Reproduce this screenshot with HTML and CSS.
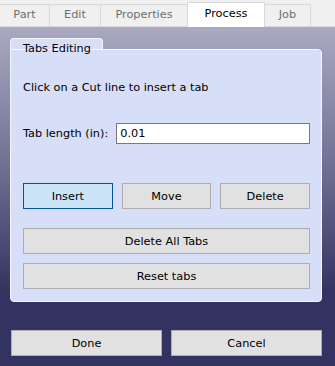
FILE: index.html
```html
<!DOCTYPE html>
<html lang="en">
<head>
  <meta charset="UTF-8" />
  <title>Tabs Editing</title>
  <link rel="stylesheet" href="styles.css">
</head>
<body>
  <div class="tabbar">
    <div class="tab tab-part">Part</div>
    <div class="tab tab-edit">Edit</div>
    <div class="tab tab-props">Properties</div>
    <div class="tab tab-process active">Process</div>
    <div class="tab tab-job">Job</div>
  </div>

  <div class="main">
    <!-- Tabs editing group -->
    <div class="group">
      <div class="legend">Tabs Editing</div>
      <div class="group-body">
        <p class="hint">Click on a Cut line to insert a tab</p>
        <div class="field">
          <label for="tabLength">Tab length (in):</label>
          <input id="tabLength" value="0.01" />
        </div>
        <div class="btn-row">
          <button class="btn selected">Insert</button>
          <button class="btn">Move</button>
          <button class="btn">Delete</button>
        </div>
        <button class="btn wide">Delete All Tabs</button>
        <button class="btn wide reset">Reset tabs</button>
      </div>
    </div>

    <div class="footer">
      <button class="btn">Done</button>
      <button class="btn">Cancel</button>
    </div>
  </div>
</body>
</html>
```

FILE: styles.css
```css
* {
  box-sizing: border-box;
}
html, body {
  margin: 0;
  padding: 0;
}
body {
  width: 335px;
  height: 366px;
  overflow: hidden;
  font-family: "DejaVu Sans", sans-serif;
  font-size: 11.3px;
  color: #000;
  background-color: #333361;
}
.tabbar {
  display: flex;
  align-items: flex-end;
  height: 27px;
  background-color: #f0f0f0;
  border-bottom: 1px solid #d9d9d9;
}
.tab {
  height: 22px;
  line-height: 20px;
  text-align: center;
  color: #6e6e6e;
  background-color: #f0f0f0;
  border-top: 1px solid #d9d9d9;
  border-right: 1px solid #d9d9d9;
}
.tab-part {
  width: 50px;
}
.tab-edit {
  width: 51px;
}
.tab-props {
  width: 87px;
}
.tab-process {
  width: 77px;
}
.tab-job {
  width: 46px;
}
.tab.active {
  height: 25px;
  margin-bottom: -1px;
  line-height: 22px;
  color: #000;
  background-color: #fff;
  border-left: 1px solid #d9d9d9;
  margin-left: -1px;
  width: 78px;
}
.main {
  height: 339px;
  padding: 11px 13px 0 10px;
  background: linear-gradient(#a9a9c2 0%, #6a6a8f 45%, #333361 78%, #333361 100%);
}
.legend {
  width: 93px;
  height: 11px;
  padding-left: 12px;
  line-height: 19px;
  white-space: nowrap;
  background-color: #d7def7;
  border: 1px solid #f4f6ff;
  border-bottom: none;
  border-radius: 4px 4px 0 0;
}
.group-body {
  height: 253px;
  padding: 30px 11px 0 12px;
  background-color: #d7def7;
  border: 1px solid #f4f6ff;
  border-top-left-radius: 0;
  border-radius: 0 4px 4px 4px;
}
.hint {
  margin: 0;
  line-height: 16px;
}
.field {
  display: flex;
  align-items: center;
  margin-top: 27px;
  gap: 8px;
}
.field input {
  flex: 1;
  height: 21px;
  padding: 0 3px;
  font-family: inherit;
  font-size: inherit;
  border: 1px solid #7a7a7a;
  background-color: #fff;
  outline: none;
}
.btn {
  height: 26px;
  padding: 0;
  font-family: inherit;
  font-size: inherit;
  color: #000;
  background-color: #e1e1e1;
  border: 1px solid #adadad;
}
.btn.selected {
  background-color: #cce4f7;
  border-color: #005499;
}
.btn-row {
  display: flex;
  gap: 9px;
  margin-top: 39px;
}
.btn-row .btn {
  flex: 1;
}
.wide {
  display: block;
  width: 100%;
  margin-top: 19px;
}
.wide.reset {
  margin-top: 9px;
}
.footer {
  display: flex;
  gap: 9px;
  margin-top: 28px;
  padding-left: 1px;
}
.footer .btn {
  flex: 1;
}
```
